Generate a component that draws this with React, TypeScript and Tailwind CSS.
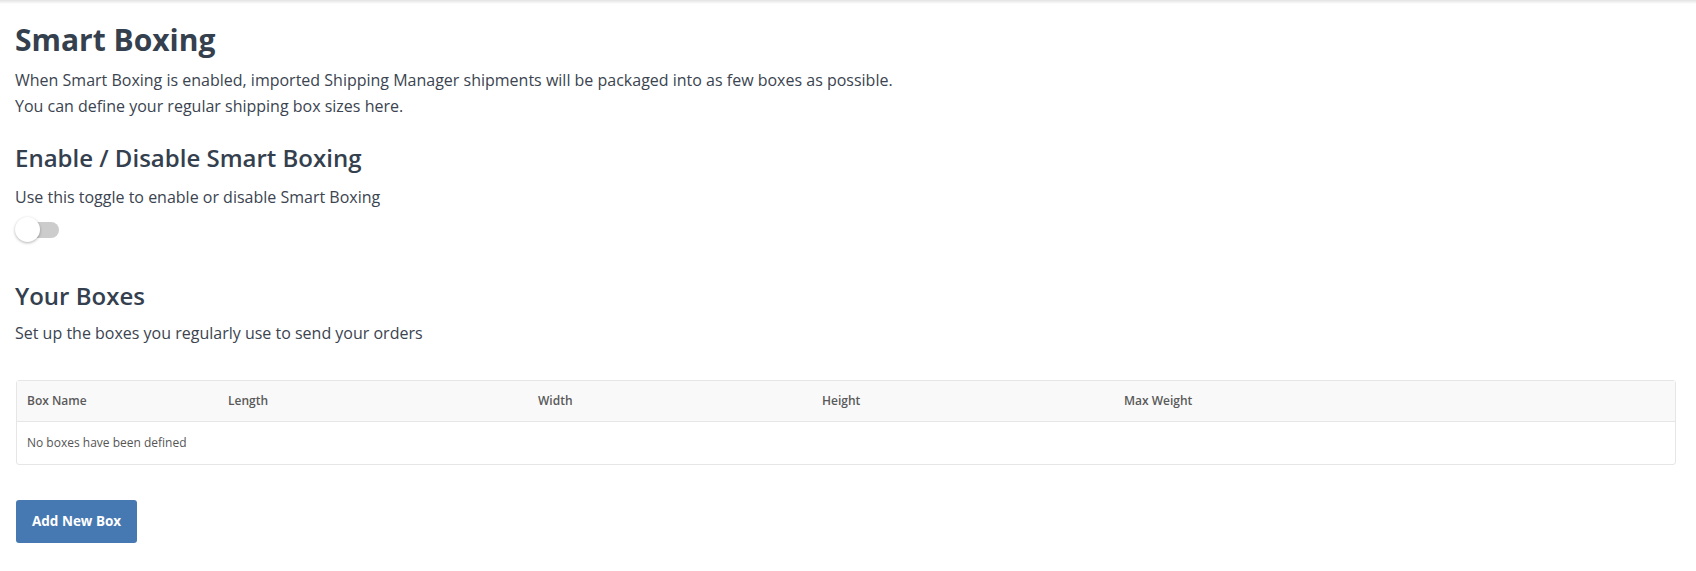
import React from "react";

export default function App() {
  return (
    <div className="w-[1696px] h-[571px] bg-white overflow-hidden text-[#3b4450]" style={{ fontFamily: '"Open Sans", "Liberation Sans", sans-serif' }}>
      <div className="h-[4px] bg-gradient-to-b from-[#e2e2e2] to-white" />
      <div className="pl-[15px] pr-[20px]">
        <h1 className="mt-[18px] text-[30px] leading-[36px] font-bold text-[#34404e]">Smart Boxing</h1>
        <div className="mt-[9px] text-[16px] leading-[26px]">
          <p>When Smart Boxing is enabled, imported Shipping Manager shipments will be packaged into as few boxes as possible.</p>
          <p>You can define your regular shipping box sizes here.</p>
        </div>

        <h2 className="mt-[24px] text-[24px] leading-[30px] font-semibold text-[#34404e]">Enable / Disable Smart Boxing</h2>
        <p className="mt-[12px] text-[16px] leading-[24px]">Use this toggle to enable or disable Smart Boxing</p>
        <div className="mt-[8px] relative w-[44px] h-[25px]">
          <div className="absolute left-[4px] right-0 top-[5px] h-[16px] rounded-full bg-[#cccccc]" />
          <div className="absolute left-0 top-0 w-[25px] h-[25px] rounded-full bg-white shadow-[0_1px_3px_rgba(0,0,0,0.3)]" />
        </div>

        <h2 className="mt-[39px] text-[24px] leading-[30px] font-semibold text-[#34404e]">Your Boxes</h2>
        <p className="mt-[10px] text-[16px] leading-[24px]">Set up the boxes you regularly use to send your orders</p>

        <div className="mt-[35px] ml-px border border-[#e6e6e6] rounded-[3px] text-[12px] text-[#555]">
          <div className="grid grid-cols-[201px_310px_284px_302px_1fr] h-[41px] items-center bg-[#f9f9f9] border-b border-[#e6e6e6] font-semibold text-[#5a5a5a]">
            <div className="pl-[10px]">Box Name</div>
            <div className="pl-[10px]">Length</div>
            <div className="pl-[10px]">Width</div>
            <div className="pl-[10px]">Height</div>
            <div className="pl-[10px]">Max Weight</div>
          </div>
          <div className="h-[42px] flex items-center pl-[10px]">No boxes have been defined</div>
        </div>

        <button className="mt-[35px] ml-px h-[43px] px-[16px] rounded-[3px] bg-[#4679b2] text-white text-[13.5px] font-bold">Add New Box</button>
      </div>
    </div>
  );
}
